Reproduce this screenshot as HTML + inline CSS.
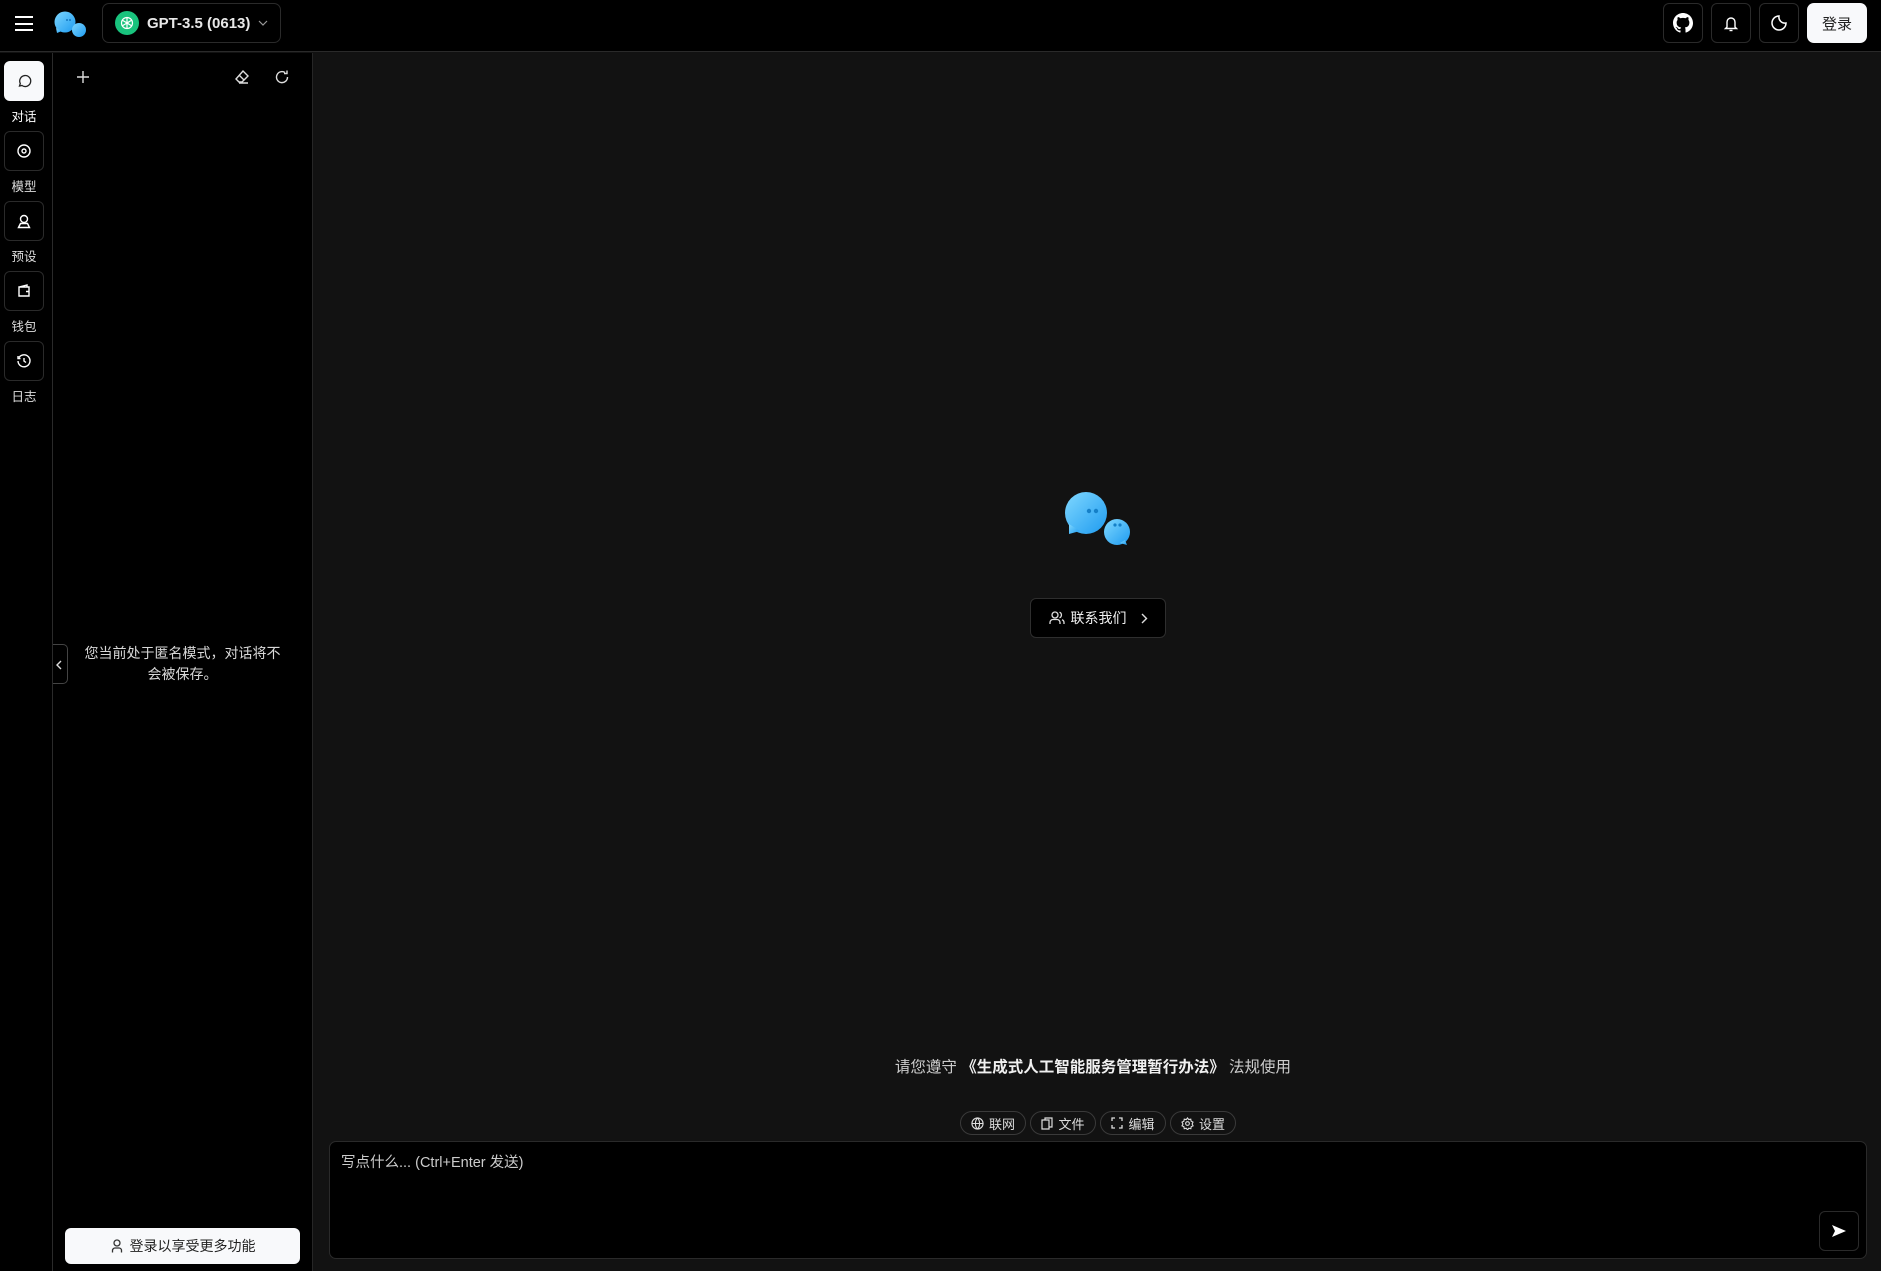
<!DOCTYPE html>
<html><head><meta charset="utf-8"><style>
*{box-sizing:border-box;margin:0;padding:0}
body{width:1881px;height:1271px;background:#121212;font-family:"Liberation Sans","Noto Sans CJK SC",sans-serif;color:#e5e5e5;position:relative;overflow:hidden;font-size:14px}
.abs{position:absolute}
.hdr{left:0;top:0;width:1881px;height:52px;background:#000;border-bottom:1px solid #2a2a2a}
.ib{position:absolute;width:40px;height:40px;border:1px solid #2a2a2a;border-radius:6px;display:flex;align-items:center;justify-content:center}
.rail{left:0;top:53px;width:53px;height:1218px;background:#000;border-right:1px solid #2a2a2a}
.lbl{position:absolute;left:0;width:48px;text-align:center;font-size:12.5px;color:#ddd}
.side{left:53px;top:53px;width:260px;height:1218px;background:#000;border-right:1px solid #262626}
.pill{position:absolute;top:1111px;width:66px;height:24px;border:1px solid #3a3a3a;border-radius:12px;display:flex;align-items:center;justify-content:center;gap:5px;font-size:13px;color:#ddd}
svg{display:block}
</style></head><body>
<div class="abs hdr"></div>
<div class="abs" style="left:15px;top:15px;width:18px;height:16px">
<div style="height:2px;background:#fff;margin-top:1px"></div><div style="height:2px;background:#fff;margin-top:4.5px"></div><div style="height:2px;background:#fff;margin-top:4.5px"></div></div>
<svg class="abs" style="left:53px;top:11px" width="35" height="28" viewBox="0 0 35 28"><defs><linearGradient id="g" x1="0" y1="0" x2="1" y2="1"><stop offset="0" stop-color="#7dd6ff"/><stop offset="1" stop-color="#1e9bf0"/></linearGradient></defs><circle cx="12" cy="11" r="10.5" fill="url(#g)"/><path d="M3 17 L4 22 L9 20Z" fill="url(#g)"/><circle cx="26" cy="19" r="7" fill="url(#g)"/><circle cx="14" cy="9" r="1" fill="#1477c0"/><circle cx="17" cy="9" r="1" fill="#1477c0"/></svg>
<div class="abs" style="left:102px;top:3px;width:179px;height:40px;border:1px solid #2a2a2a;border-radius:7px;display:flex;align-items:center;padding-left:12px">
<div style="width:24px;height:24px;border-radius:50%;background:#19c37d;display:flex;align-items:center;justify-content:center"><svg width="16" height="16" viewBox="0 0 16 16" fill="none" stroke="#fff" stroke-width="1.2"><circle cx="8" cy="8" r="5.5"/><path d="M8 2.5v11M3 5l10 6M3 11l10-6"/></svg></div>
<span style="margin-left:8px;font-size:15px;font-weight:bold;color:#e8e8e8">GPT-3.5 (0613)</span>
<svg style="margin-left:8px" width="10" height="6" viewBox="0 0 10 6" fill="none" stroke="#999" stroke-width="1.2"><path d="M1 1l4 4 4-4"/></svg></div>
<div class="ib" style="left:1663px;top:3px"><svg width="20" height="20" viewBox="0 0 16 16" fill="#fff"><path d="M8 0C3.580 0 0 3.58 0 8c0 3.54 2.29 6.53 5.47 7.590.4.07.55-.17.55-.38v-1.33c-2.23.48-2.7-1.07-2.7-1.07-.36-.93-.89-1.17-.89-1.17-.73-.5.05-.49.05-.49.8.06 1.23.83 1.23.83.71 1.22 1.87.87 2.33.66.07-.52.28-.87.5-1.07-1.78-.2-3.64-.89-3.64-3.95 0-.87.31-1.59.82-2.15-.08-.2-.36-1.02.08-2.12 0 0 .67-.21 2.2.82a7.6 7.6 0 0 1 4 0c1.53-1.04 2.2-.82 2.2-.82.44 1.1.16 1.92.08 2.12.51.56.82 1.27.82 2.15 0 3.07-1.87 3.75-3.65 3.95.29.25.54.73.54 1.48v2.2c0 .21.15.46.55.38A8 8 0 0 0 16 8c0-4.42-3.58-8-8-8z"/></svg></div>
<div class="ib" style="left:1711px;top:3px"><svg width="16" height="17" viewBox="0 0 16 17" fill="none" stroke="#fff" stroke-width="1.4"><path d="M4 12V7a4 4 0 0 1 8 0v5l1.5 1.5h-11z"/><path d="M6.5 15.5h3"/></svg></div>
<div class="ib" style="left:1759px;top:3px"><svg width="18" height="18" viewBox="0 0 18 18" fill="none" stroke="#fff" stroke-width="1.5"><path d="M9 2a6 6 0 0 0 7 7A7 7 0 1 1 9 2z"/></svg></div>
<div class="abs" style="left:1807px;top:3px;width:60px;height:40px;background:#f8f9fb;border-radius:7px;color:#222;font-size:15px;display:flex;align-items:center;justify-content:center">登录</div>
<div class="abs rail"></div>
<div class="ib" style="left:4px;top:61px;background:#f8f9fb;border-color:#f8f9fb"><svg width="16" height="16" viewBox="0 0 16 16" fill="none" stroke="#222" stroke-width="1.3"><path d="M3.5 13l.8-2.5A5.5 5.5 0 1 1 6 12.5z"/></svg></div>
<div class="lbl" style="top:106px;color:#fff">对话</div>
<div class="ib" style="left:4px;top:131px"><svg width="16" height="16" viewBox="0 0 16 16" fill="none" stroke="#fff" stroke-width="1.4"><circle cx="8" cy="8" r="6"/><circle cx="8" cy="8" r="2"/></svg></div>
<div class="lbl" style="top:176px">模型</div>
<div class="ib" style="left:4px;top:201px"><svg width="16" height="16" viewBox="0 0 16 16" fill="none" stroke="#fff" stroke-width="1.4"><circle cx="8" cy="6" r="3.5"/><path d="M2.5 14.5l2-4h7l2 4z"/></svg></div>
<div class="lbl" style="top:246px">预设</div>
<div class="ib" style="left:4px;top:271px"><svg width="16" height="16" viewBox="0 0 16 16" fill="none" stroke="#fff" stroke-width="1.4"><path d="M13 4H3v9h10zM3 4l8-2v2M10 8.5h3"/></svg></div>
<div class="lbl" style="top:316px">钱包</div>
<div class="ib" style="left:4px;top:341px"><svg width="16" height="16" viewBox="0 0 16 16" fill="none" stroke="#fff" stroke-width="1.4"><path d="M3 4.5A6 6 0 1 1 2 8M2 3v2.5h2.5M8 5v3l2 1.5"/></svg></div>
<div class="lbl" style="top:386px">日志</div>
<div class="abs side"></div>
<svg class="abs" style="left:76px;top:70px" width="14" height="14" viewBox="0 0 14 14" stroke="#ddd" stroke-width="1.4"><path d="M7 1v12M1 7h12"/></svg>
<svg class="abs" style="left:234px;top:69px" width="16" height="16" viewBox="0 0 16 16" fill="none" stroke="#ddd" stroke-width="1.4"><path d="M9 2l5 5-6 6H5L2 10z M5.5 6.5l5 5M5 14h9"/></svg>
<svg class="abs" style="left:274px;top:69px" width="16" height="16" viewBox="0 0 16 16" fill="none" stroke="#ddd" stroke-width="1.4"><path d="M13.5 8A5.5 5.5 0 1 1 11 3.5M13 1.5v3h-3"/></svg>
<div class="abs" style="left:53px;top:644px;width:15px;height:40px;border:1px solid #444;border-left:none;border-radius:0 5px 5px 0;background:#000"><svg style="margin:15px 0 0 3px" width="6" height="10" viewBox="0 0 6 10" fill="none" stroke="#ddd" stroke-width="1.4"><path d="M5 1L1 5l4 4"/></svg></div>
<div class="abs" style="left:80px;top:643px;width:205px;text-align:center;font-size:14px;line-height:21px;color:#d8d8d8">您当前处于匿名模式，对话将不会被保存。</div>
<div class="abs" style="left:65px;top:1228px;width:235px;height:36px;background:#f8f9fb;border-radius:6px;display:flex;align-items:center;justify-content:center;gap:6px;color:#222;font-size:14px"><svg width="14" height="14" viewBox="0 0 14 14" fill="none" stroke="#333" stroke-width="1.3"><circle cx="7" cy="4" r="3"/><path d="M2.5 13.5v-2a2.5 2.5 0 0 1 2.5-2.5h4a2.5 2.5 0 0 1 2.5 2.5v2"/></svg>登录以享受更多功能</div>
<svg class="abs" style="left:1064px;top:492px" width="68" height="54" viewBox="0 0 68 54"><defs><linearGradient id="g2" x1="0" y1="0" x2="1" y2="1"><stop offset="0" stop-color="#80d8ff"/><stop offset="1" stop-color="#1e9bf0"/></linearGradient></defs><circle cx="22" cy="21" r="21" fill="url(#g2)"/><path d="M5 32 L5 42 L16 39Z" fill="url(#g2)"/><circle cx="53" cy="40" r="13" fill="url(#g2)"/><path d="M61 48 L63 53 L56 51Z" fill="url(#g2)"/><circle cx="25" cy="19" r="2.2" fill="#1580c8"/><circle cx="32" cy="19" r="2.2" fill="#1580c8"/><circle cx="51" cy="33" r="1.6" fill="#1580c8"/><circle cx="56" cy="33" r="1.6" fill="#1580c8"/></svg>
<div class="abs" style="left:1030px;top:598px;width:136px;height:40px;background:#000;border:1px solid #2e2e2e;border-radius:6px;display:flex;align-items:center;justify-content:center;gap:6px;font-size:14px;color:#f0f0f0"><svg width="16" height="16" viewBox="0 0 16 16" fill="none" stroke="#ddd" stroke-width="1.3"><circle cx="6" cy="5" r="3"/><path d="M1 14v-1.5A3 3 0 0 1 4 9.5h4a3 3 0 0 1 3 3V14M10.5 2.2a3 3 0 0 1 0 5.6M15 14v-1.5a3 3 0 0 0-2-2.8"/></svg>联系我们<svg style="margin-left:8px" width="7" height="11" viewBox="0 0 7 11" fill="none" stroke="#ddd" stroke-width="1.4"><path d="M1 1l4.5 4.5L1 10"/></svg></div>
<div class="abs" style="left:313px;top:1055px;width:1568px;text-align:center;font-size:15.5px;color:#ccc;padding-right:8px">请您遵守 <span style="color:#f0f0f0;font-weight:bold">《生成式人工智能服务管理暂行办法》</span> 法规使用</div>
<div class="pill" style="left:960px"><svg width="13" height="13" viewBox="0 0 14 14" fill="none" stroke="#ddd" stroke-width="1.2"><circle cx="7" cy="7" r="6"/><path d="M1 7h12M7 1c3 3 3 9 0 12M7 1c-3 3-3 9 0 12"/></svg>联网</div>
<div class="pill" style="left:1030px"><svg width="12" height="13" viewBox="0 0 12 13" fill="none" stroke="#ddd" stroke-width="1.2"><path d="M4 3V1h7v9H8M1 3h7v9H1z"/></svg>文件</div>
<div class="pill" style="left:1100px"><svg width="12" height="12" viewBox="0 0 12 12" fill="none" stroke="#ddd" stroke-width="1.3"><path d="M1 4V1h3M8 1h3v3M11 8v3H8M4 11H1V8"/></svg>编辑</div>
<div class="pill" style="left:1170px"><svg width="13" height="13" viewBox="0 0 14 14" fill="none" stroke="#ddd" stroke-width="1.2"><circle cx="7" cy="7" r="2"/><path d="M7 1l1.3 1.8 2.2-.5.4 2.2 2 1L12 7.5l1 2-2 .9-.4 2.2-2.2-.5L7 13.9l-1.3-1.8-2.2.5-.4-2.2-2-.9 1-2-1-2 2-1 .4-2.2 2.2.5z"/></svg>设置</div>
<div class="abs" style="left:329px;top:1141px;width:1538px;height:118px;background:#000;border:1px solid #2a2a2a;border-radius:7px"></div>
<div class="abs" style="left:341px;top:1151px;font-size:14.5px;color:#ccc">写点什么... (Ctrl+Enter 发送)</div>
<div class="ib" style="left:1819px;top:1211px"><svg width="16" height="14" viewBox="0 0 16 14" fill="#fff"><path d="M1 1l14 6-14 6 3-6z"/></svg></div>
</body></html>
